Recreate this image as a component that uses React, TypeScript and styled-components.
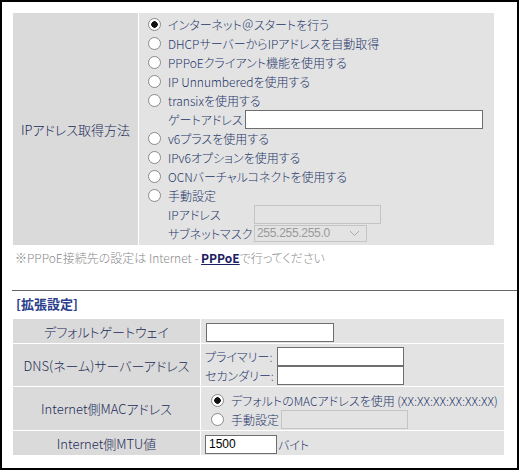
import React from 'react';
import styled, {createGlobalStyle} from 'styled-components';

const GlobalStyle = createGlobalStyle`
  html, body {
    margin: 0;
    padding: 0;
    background: #fff;
  }
  body {
    font-family: "Noto Sans CJK JP", "Liberation Sans", sans-serif;
    font-size: 12px;
    font-weight: 300;
    color: #26376a;
    font-feature-settings: "palt";
  }
`;

const Frame = styled.div`
  box-sizing: border-box;
  width: 519px;
  height: 470px;
  border: 2px solid #000;
  padding: 11px 0 0 11px;
  overflow: hidden;
`;

const SettingTable = styled.div<{$left: number; $width: number}>`
  display: grid;
  grid-template-columns: ${({$left}) => $left}px 1fr;
  width: ${({$width}) => $width}px;
  gap: 1px;
  background: #fff;
`;

const HeadCell = styled.div`
  background: #dadada;
  display: flex;
  align-items: center;
  justify-content: center;
  font-size: 13px;
  color: #1c2b58;
`;

const ValueCell = styled.div<{$padLeft?: number}>`
  background: #e3e3e3;
  display: flex;
  flex-direction: column;
  justify-content: center;
  padding: 2px 0 0 ${({$padLeft}) => $padLeft ?? 4}px;
  min-height: 22px;
`;

const Row = styled.label<{$indent?: boolean}>`
  display: flex;
  align-items: center;
  height: 19px;
  line-height: 19px;
  white-space: nowrap;
  padding-left: ${({$indent}) => ($indent ? 20 : 0)}px;
`;

const Radio = styled.input.attrs({type: 'radio'})`
  appearance: none;
  box-sizing: border-box;
  width: 13px;
  height: 13px;
  margin: 0 7px 0 0;
  border-radius: 50%;
  border: 1px solid #8a8a8a;
  background: #fff;
  flex: none;
  &:checked {
    background: radial-gradient(circle, #111 0 3px, #fff 3.5px);
  }
`;

const TextInput = styled.input<{$w: number; $disabled?: boolean}>`
  box-sizing: border-box;
  width: ${({$w}) => $w}px;
  height: 19px;
  margin: 0;
  padding: 0 3px;
  border: 1px solid ${({$disabled}) => ($disabled ? '#c4c4c4' : '#6e6e6e')};
  background: ${({$disabled}) => ($disabled ? '#e3e3e3' : '#fff')};
  font-family: "Liberation Sans", sans-serif;
  font-size: 12px;
  color: #000;
  outline: none;
`;

const SubLabel = styled.span<{$w?: number}>`
  display: inline-block;
  width: ${({$w}) => ($w ? `${$w}px` : 'auto')};
  margin-right: 2px;
`;

const SelectBox = styled.div`
  box-sizing: border-box;
  width: 113px;
  height: 17px;
  border: 1px solid #c4c4c4;
  display: flex;
  align-items: center;
  justify-content: space-between;
  padding: 0 6px 0 2px;
  color: #9a9a9a;
  font-family: "Liberation Sans", sans-serif;
  font-size: 12px;
  letter-spacing: -0.3px;
`;

const Note = styled.p`
  margin: 5px 0 0 2px;
  color: #8a8a8a;
  font-size: 12px;
  height: 16px;
  line-height: 16px;
`;

const NoteLink = styled.a`
  color: #1c2060;
  font-weight: bold;
  text-decoration: underline;
`;

const Divider = styled.hr`
  border: none;
  border-top: 1px solid #666;
  margin: 24px 0 0 -1px;
  height: 0;
`;

const SectionTitle = styled.h3`
  margin: 3px 0 6px 3px;
  font-size: 13px;
  font-weight: bold;
  color: #2b3e8c;
  height: 19px;
  line-height: 19px;
`;

const ExtRow = styled.div<{$h: number}>`
  display: contents;
  & > div {
    height: ${({$h}) => $h}px;
    box-sizing: border-box;
  }
`;

const Unit = styled.span`
  margin-left: 1px;
`;

const Chevron = () => (
  <svg width="11" height="7" viewBox="0 0 11 7">
    <path d="M1 1l4.5 4.5L10 1" fill="none" stroke="#aaa" strokeWidth="1" />
  </svg>
);

const methods = [
  'インターネット＠スタートを行う',
  'DHCPサーバーからIPアドレスを自動取得',
  'PPPoEクライアント機能を使用する',
  'IP Unnumberedを使用する',
  'transixを使用する',
];

const methods2 = ['v6プラスを使用する', 'IPv6オプションを使用する', 'OCNバーチャルコネクトを使用する', '手動設定'];

export default function App() {
  return (
    <>
      <GlobalStyle />
      <Frame>
        <SettingTable $left={125} $width={481}>
          <HeadCell>IPアドレス取得方法</HeadCell>
          <ValueCell $padLeft={9} style={{padding: '2px 0 2px 9px'}}>
            {methods.map((m, i) => (
              <Row key={m}>
                <Radio name="method" defaultChecked={i === 0} />
                {m}
              </Row>
            ))}
            <Row $indent>
              <SubLabel>ゲートアドレス</SubLabel>
              <TextInput $w={238} />
            </Row>
            {methods2.map(m => (
              <Row key={m}>
                <Radio name="method" />
                {m}
              </Row>
            ))}
            <Row $indent>
              <SubLabel $w={84}>IPアドレス</SubLabel>
              <TextInput $w={127} $disabled disabled />
            </Row>
            <Row $indent>
              <SubLabel $w={84}>サブネットマスク</SubLabel>
              <SelectBox>
                255.255.255.0
                <Chevron />
              </SelectBox>
            </Row>
          </ValueCell>
        </SettingTable>

        <Note>
          ※PPPoE接続先の設定は Internet - <NoteLink href="#">PPPoE</NoteLink>で行ってください
        </Note>
        <Divider />
        <SectionTitle>[拡張設定]</SectionTitle>

        <SettingTable $left={187} $width={491}>
          <ExtRow $h={24}>
            <HeadCell>デフォルトゲートウェイ</HeadCell>
            <ValueCell $padLeft={5}>
              <Row>
                <TextInput $w={128} />
              </Row>
            </ValueCell>
          </ExtRow>
          <ExtRow $h={42}>
            <HeadCell>DNS(ネーム)サーバーアドレス</HeadCell>
            <ValueCell $padLeft={4}>
              <Row>
                <SubLabel $w={70}>プライマリー:</SubLabel>
                <TextInput $w={127} />
              </Row>
              <Row>
                <SubLabel $w={70}>セカンダリー:</SubLabel>
                <TextInput $w={127} />
              </Row>
            </ValueCell>
          </ExtRow>
          <ExtRow $h={43}>
            <HeadCell>Internet側MACアドレス</HeadCell>
            <ValueCell $padLeft={10}>
              <Row>
                <Radio name="mac" defaultChecked />
                デフォルトのMACアドレスを使用 (XX:XX:XX:XX:XX:XX)
              </Row>
              <Row>
                <Radio name="mac" />
                <SubLabel>手動設定</SubLabel>
                <TextInput $w={127} $disabled disabled />
              </Row>
            </ValueCell>
          </ExtRow>
          <ExtRow $h={24}>
            <HeadCell>Internet側MTU値</HeadCell>
            <ValueCell $padLeft={4}>
              <Row>
                <TextInput $w={72} defaultValue="1500" />
                <Unit>バイト</Unit>
              </Row>
            </ValueCell>
          </ExtRow>
        </SettingTable>
      </Frame>
    </>
  );
}
